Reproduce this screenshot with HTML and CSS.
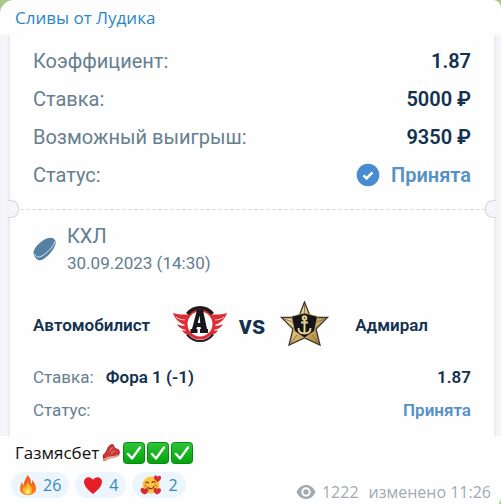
FILE: index.html
```html
<!DOCTYPE html>
<html lang="ru">
<head>
<meta charset="utf-8">
<meta name="viewport" content="width=device-width, initial-scale=1">
<title>Сливы от Лудика</title>
<link rel="stylesheet" href="styles.css">
</head>
<body>
<svg class="defs" aria-hidden="true">
  <defs>
    <linearGradient id="gold" x1="0" y1="0" x2="1" y2="1"><stop offset="0" stop-color="#fff3bf"/><stop offset=".5" stop-color="#d9bd70"/><stop offset="1" stop-color="#9c7830"/></linearGradient>
    <linearGradient id="green" x1="0" y1="0" x2="0" y2="1"><stop offset="0" stop-color="#2fc536"/><stop offset="1" stop-color="#04a30e"/></linearGradient>
    <linearGradient id="flame" x1="0" y1="0" x2="0" y2="1"><stop offset="0" stop-color="#f0501e"/><stop offset="1" stop-color="#f98a1b"/></linearGradient>
    <symbol id="check" viewBox="0 0 22 22">
      <rect x=".5" y=".5" width="21" height="21" rx="3" fill="url(#green)" stroke="#078a12"/>
      <path d="M5 12l4 4.500L17 5.500" fill="none" stroke="#fff" stroke-width="2.400" stroke-linecap="round" stroke-linejoin="round"/>
    </symbol>
  </defs>
</svg>
<article class="message">
  <header class="message-head"><a class="channel" href="#">Сливы от Лудика</a></header>

  <section class="slip">
    <div class="ticket">
      <dl class="summary">
        <div class="row"><dt>Коэффициент:</dt><dd>1.87</dd></div>
        <div class="row"><dt>Ставка:</dt><dd>5000 ₽</dd></div>
        <div class="row"><dt>Возможный выигрыш:</dt><dd>9350 ₽</dd></div>
        <div class="row"><dt>Статус:</dt>
          <dd class="accepted">
            <svg width="24" height="24" viewBox="0 0 24 24" aria-hidden="true"><circle cx="12" cy="12" r="11.300" fill="#478bd0"/><path d="M7.500 12.300l3 3 6-6" fill="none" stroke="#fff" stroke-width="2.600"/></svg>
            Принята</dd></div>
      </dl>
      <div class="perforation"></div>
      <div class="league">
        <svg width="24" height="24" viewBox="0 0 24 24" aria-hidden="true">
          <path d="M.5 15C1 10 11 1 17 .8c3-.2 5.500 1.500 5.700 4.500C23 11 13 22.500 7.500 23.300 4 23.800.2 19 .5 15z" fill="#567fa2"/>
          <path d="M1.500 17c1.500 3 4 4 7.500 2C15 15 20.500 9.500 22 4.500" fill="none" stroke="#dceaf4" stroke-width="1"/>
        </svg>
        <div>
          <h2>КХЛ</h2>
          <time datetime="2023-09-30T14:30">30.09.2023 (14:30)</time>
        </div>
      </div>
      <div class="teams">
        <strong class="home">Автомобилист</strong>
        <div class="versus">
          <svg width="56" height="48" viewBox="0 0 56 48" role="img" aria-label="Автомобилист">
            <g fill="#e02c35">
              <path d="M2 12c5 2 11 1 17 2l-3 8v8l3 4c-4-.5-7-2-8-5 2 1 4 1 5 0-5-.5-9-3-10-6 3 2 7 2 9 1C9 23 4 18 2 12z"/>
              <path d="M56 12c-5 2-11 1-17 2l3 8v8l-3 4c4-.5 7-2 8-5-2 1-4 1-5 0 5-.5 9-3 10-6-3 2-7 2-9 1 6-1 11-6 13-12z"/>
            </g>
            <path d="M5 16c4 3 8 3 12 3M6 22c4 2 7 2 10 2M53 16c-4 3-8 3-12 3M52 22c-4 2-7 2-10 2" fill="none" stroke="#fff" stroke-width=".8"/>
            <circle cx="29" cy="23" r="14" fill="#fff" stroke="#e02c35" stroke-width="3"/>
            <path d="M15 12a17.500 17.500 0 0 1 28 0l-3 2a14 14 0 0 0-22 0z" fill="#211b1f"/>
            <path d="M17 33a15 15 0 0 0 24 0l2 1a17.500 17.500 0 0 1-28 0z" fill="#211b1f"/>
            <path d="M26 9h6l4 19h1v4h-8v-4h1l-.5-2h-3.500l-.7 2h1.200v4h-7v-4h1.500zM28.700 14.500L26.700 22h2.500z" fill="#17171c" fill-rule="evenodd"/>
          </svg>
          <span>vs</span>
          <svg width="56" height="48" viewBox="0 0 56 48" role="img" aria-label="Адмирал">
            <path d="M27.500 1l6 15.500H50.500L39 28l4 16-15.500-7L12 44l4-16L4.500 16.500h17z" fill="url(#gold)" stroke="#3b3432" stroke-width="1.300"/>
            <path d="M27.500 3v10M7 18l9 3M48 18l-9 3M14 42l6-8M41 42l-6-8" stroke="#907447" stroke-width="1"/>
            <path d="M27.500 12l13 3.500-3 14.500-10 7-10-7-3-14.500z" fill="#151519" stroke="#c0a66b" stroke-width=".8"/>
            <g fill="none" stroke="#e6d18e" stroke-width="2"><circle cx="27.500" cy="17" r="1.800"/><path d="M27.500 19V33M24 21.500h7M21.500 27c0 4 3 5.500 6 5.500s6-1.500 6-5.500"/></g>
          </svg>
        </div>
        <strong class="away">Адмирал</strong>
      </div>
      <dl class="pick">
        <div class="row"><dt>Ставка: <b>Фора 1 (-1)</b></dt><dd>1.87</dd></div>
        <div class="row"><dt>Статус:</dt><dd class="accepted">Принята</dd></div>
      </dl>
    </div>
  </section>

  <footer class="message-foot">
    <p class="caption">Газмясбет
      <svg width="20" height="22" viewBox="0 0 22 22" aria-hidden="true">
        <path d="M2 13C6 11 7 2 12 1c3 0 2 4 5 5 4 1 4.500 4 3 7-2 4-10 2-14 6-2 2-4 1-4-2z" fill="#a51f25"/>
        <path d="M3 13C7 11 8 3 12 2c2.500 0 2 4 5 5 3 1 3.500 3 2 5-3 3-9 1-13 4-2 1-4-1-3-3z" fill="#c93b3a"/>
        <path d="M2 15c0 1.500 1 2.500 3 1.500 4-3 11-1 14-4v1.500c-3 4-9 2-13 5-2 2-4 0-4-4z" fill="#e3a393"/>
        <path d="M9 9c2-1 2-4 4-4M11 11l4-2" stroke="#ee9489" fill="none"/>
      </svg>
      <svg width="22" height="22" aria-label="✅"><use href="#check"/></svg>
      <svg width="22" height="22" aria-label="✅"><use href="#check"/></svg>
      <svg width="22" height="22" aria-label="✅"><use href="#check"/></svg>
    </p>
    <div class="bar">
      <div class="reactions">
        <button type="button" aria-label="Огонь 26">
          <svg width="18" height="20" viewBox="0 0 18 20" aria-hidden="true"><path d="M8 0c4 3 4 6 4 9 1-1 1-2 1-4 3 3 4 6 4 9 0 4-4 6-8 6s-8-2-8-6c0-3 1-5 2-7 .5 2 1 3 2 3C4 6 8 4 8 0z" fill="url(#flame)"/><path d="M9 7c1 4 4 4 4 8 0 3-2 4.500-4 4.500S4 18 4 15c0-2 1-3 1-4 1 1 1 2 2 2 0-2 1-4 2-6z" fill="#fdbb2b"/><path d="M9 13c1 2 2 2 2 4s-4 3-4.500 0c0-2 2-2 2.500-4z" fill="#ffeb78"/></svg>
          26</button>
        <button type="button" aria-label="Сердце 4">
          <svg width="20" height="20" viewBox="0 0 20 20" aria-hidden="true"><path d="M10 19C5 15 1 11 1 6.500c0-5 7-6 9-1.500 2-4.500 9-3.500 9 1.500C19 11 15 15 10 19z" fill="#e51e27"/></svg>
          4</button>
        <button type="button" aria-label="Улыбка с сердечками 2">
          <svg width="22" height="20" viewBox="0 0 22 20" aria-hidden="true"><circle cx="11" cy="10" r="8.500" fill="#fbc43c"/><path d="M5.500 8q1.500-2 3 0M12 7.500q1.500-2 3 0M8 12.500q3.500 3 6-1" fill="none" stroke="#65391b" stroke-width="1.200" stroke-linecap="round"/><g fill="#f28c42"><circle cx="5.500" cy="11" r="1.500"/><circle cx="16" cy="10.500" r="1.500"/></g><path d="M17.500 7C15 5 14 4 14 2.500 14 0 17 0 17.500 2 18.500 0 21.500.5 21 3c0 1.500-1.500 3-3.500 4z" fill="#d92b35"/><path d="M4.500 19.500C2 18 .5 17 .5 15c0-2.500 3.500-2.500 4-.5 1-2 4-1.500 4 .5s-1.500 3.500-4 4.500zM17 19.500c-2.500-1.500-3.500-2.500-3.500-4.500 0-2.500 3-2.500 3.500-.5 1-2 4-1.500 4 .5s-1.500 3.500-4 4.500z" fill="#d92b35"/></svg>
          2</button>
      </div>
      <div class="meta">
        <svg width="20" height="16" viewBox="0 0 20 16" aria-hidden="true"><path d="M.5 8C3 3 6 1 10 1s7 2 9.500 7C17 13 14 15 10 15S3 13 .5 8z" fill="#a1aab3"/><circle cx="10" cy="8" r="4.700" fill="#fff"/><circle cx="10" cy="8" r="2.700" fill="#a1aab3"/></svg>
        <span>1222</span>
        <span class="edited">изменено 11:26</span>
      </div>
    </div>
  </footer>
</article>
</body>
</html>
```
FILE: styles.css
```css
* { box-sizing: border-box; }

body {
  margin: 0;
  background: #a9c88c;
  font-family: "Open Sans", "Noto Sans", sans-serif;
}

.defs { position: absolute; width: 0; height: 0; }

.message {
  display: flex;
  flex-direction: column;
  min-height: 100vh;
  background: #fefefe;
  border-radius: 14px 8px 8px 0;
  overflow: hidden;
}

.message-head { padding: 6px 15px 5px; line-height: 24px; }
.channel { display: block; color: #2b86c5; font-size: 17px; text-decoration: none; }

.slip {
  padding: 0 7px 0 10px;
  background: #f4f4f9;
  font-family: Roboto, "Noto Sans", sans-serif;
  overflow: hidden;
}

.ticket {
  padding: 7px 23px 9px;
  background: #fefefe;
  box-shadow: 0 0 3px #cfcfd8;
}

dl, dd, h2, p { margin: 0; }

.row { display: flex; justify-content: space-between; align-items: center; }
.row dt { color: #66808f; }
.row dd, .row b { color: #12314f; font-weight: 600; }
.row dd.accepted { display: flex; align-items: center; gap: 11px; color: #5591c5; }

.summary { font-size: 20px; line-height: 38px; }

.perforation {
  display: flex;
  align-items: center;
  justify-content: space-between;
  height: 18px;
  margin: 6px -25px 4px;
  background: linear-gradient(90deg, #dcdce3 60%, transparent 60%) 0 50% / 6px 1px repeat-x;
}
.perforation::before,
.perforation::after {
  content: "";
  width: 10px;
  height: 16px;
  border: 1px solid #d6d6de;
  background: #f4f4f9;
}
.perforation::before { border-left: 0; border-radius: 0 8px 8px 0; }
.perforation::after { border-right: 0; border-radius: 8px 0 0 8px; }

.league { display: flex; align-items: center; gap: 10px; color: #5f7d90; }
.league h2 { font-size: 20px; font-weight: 400; line-height: 28px; }
.league time { display: block; font-size: 17px; line-height: 26px; }

.teams {
  display: grid;
  grid-template-columns: 1fr auto 1fr;
  align-items: center;
  padding: 25px 0 12px;
  color: #12314f;
  font-size: 17px;
}
.teams strong { font-weight: 600; }
.versus { display: flex; align-items: center; gap: 12px; font-size: 26px; font-weight: 700; line-height: 48px; }
.away { padding-left: 22px; }

.pick { font-size: 17px; line-height: 33px; }
.pick b { margin-left: 8px; }

.message-foot { padding: 5px 10px 6px 11px; }

.caption {
  display: flex;
  align-items: center;
  gap: 2px;
  padding-left: 4px;
  color: #111;
  font-size: 17px;
  line-height: 24px;
}

.bar { display: flex; justify-content: space-between; align-items: center; padding-top: 5px; }
.reactions { display: flex; gap: 6px; }
.reactions button {
  display: flex;
  align-items: center;
  gap: 6px;
  height: 26px;
  padding: 0 8px;
  border: 0;
  border-radius: 13px;
  background: #edf5fc;
  color: #3489be;
  font: 16px "Open Sans", "Noto Sans", sans-serif;
}

.meta { display: flex; align-items: center; gap: 6px; padding-top: 14px; color: #a1aab3; font-size: 16px; line-height: 16px; }
.edited { margin-left: 4px; }
```
